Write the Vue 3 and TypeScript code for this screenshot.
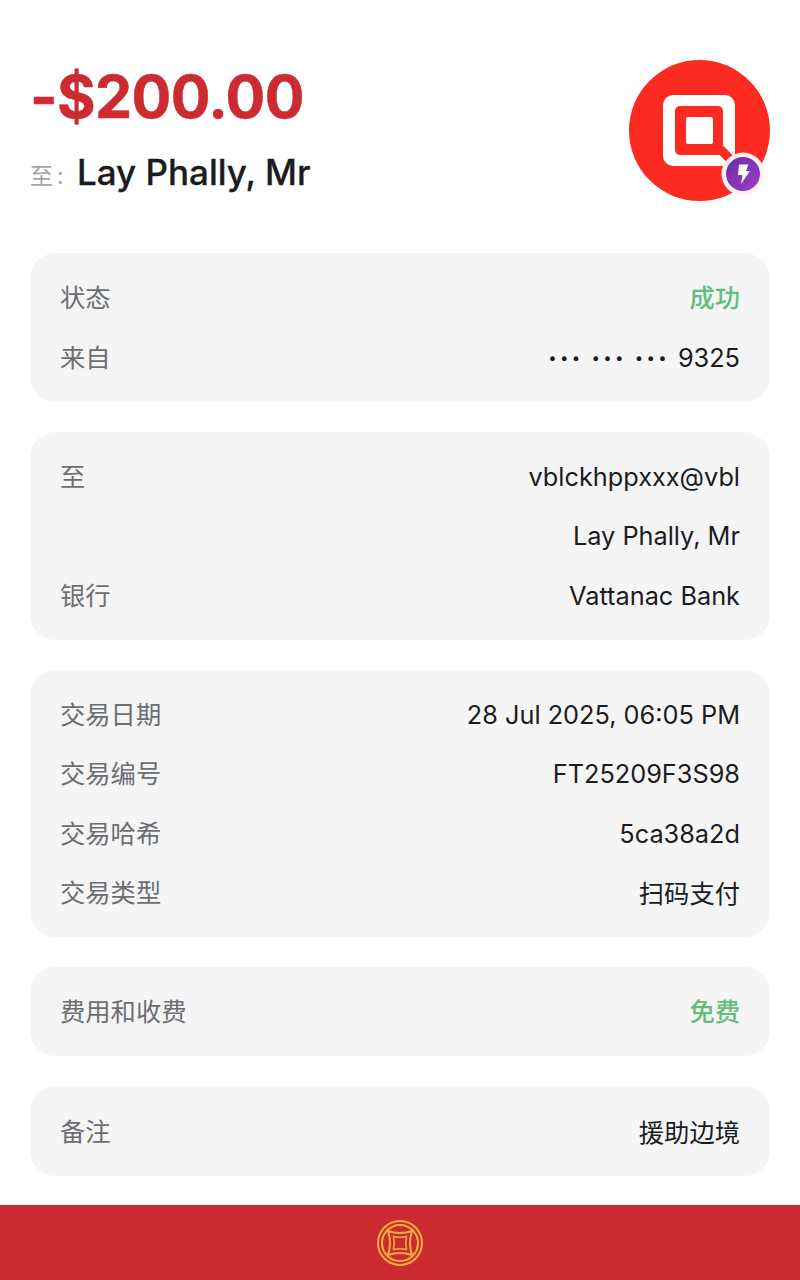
<script setup lang="ts">
interface Row { label: string; value: string; tone?: string; dots?: number }
const cards: Row[][] = [
  [
    { label: '状态', value: '成功', tone: 'good' },
    { label: '来自', value: '9325', dots: 3 },
  ],
  [
    { label: '至', value: 'vblckhppxxx@vbl' },
    { label: '', value: 'Lay Phally, Mr' },
    { label: '银行', value: 'Vattanac Bank' },
  ],
  [
    { label: '交易日期', value: '28 Jul 2025, 06:05 PM' },
    { label: '交易编号', value: 'FT25209F3S98' },
    { label: '交易哈希', value: '5ca38a2d' },
    { label: '交易类型', value: '扫码支付' },
  ],
  [{ label: '费用和收费', value: '免费', tone: 'good' }],
  [{ label: '备注', value: '援助边境' }],
]
</script>

<template>
  <div class="page">
    <header class="head">
      <div class="who">
        <div class="amount">-$200.00</div>
        <div class="to"><span class="to-label">至:</span><span class="to-name">Lay Phally, Mr</span></div>
      </div>
      <div class="logo">
        <svg width="141" height="141" viewBox="0 0 141 141">
          <circle cx="70.5" cy="70.5" r="70.5" fill="#fc2a20" />
          <rect x="34" y="35" width="72" height="71" rx="10" fill="#fff" />
          <rect x="46" y="46" width="48" height="49" rx="5" fill="#fc2a20" />
          <rect x="57" y="57" width="27" height="27" rx="2" fill="#fff" />
          <path d="M88 86 106 104" stroke="#fc2a20" stroke-width="9" />
        </svg>
        <svg class="badge" width="44" height="44" viewBox="0 0 44 44">
          <defs>
            <linearGradient id="bolt" x1="0" y1="0" x2="1" y2="1">
              <stop offset="0" stop-color="#6f2fa8" />
              <stop offset="1" stop-color="#9c3dc4" />
            </linearGradient>
          </defs>
          <circle cx="22" cy="22" r="21.500" fill="#fdf1f1" />
          <circle cx="22" cy="22" r="17" fill="url(#bolt)" />
          <path fill="#fff" d="M18 12.500h9.500l-2.500 6.500h4L20 32l1.500-9H17z" />
        </svg>
      </div>
    </header>

    <main class="cards">
      <section v-for="(card, i) in cards" :key="i" class="card">
        <div v-for="(row, j) in card" :key="j" class="row">
          <span class="label">{{ row.label }}</span>
          <span class="value" :class="row.tone">
            <span v-for="n in row.dots ?? 0" :key="n" class="dots">•••</span>{{ row.value }}
          </span>
        </div>
      </section>
    </main>

    <footer class="foot">
      <svg width="46" height="46" viewBox="0 0 46 46" fill="none" stroke="#f4ae3e">
        <circle cx="23" cy="23" r="22" stroke-width="2" />
        <circle cx="23" cy="23" r="18" stroke-width="2" />
        <path stroke-width="2" d="M11 11q12 4 24 0q-4 12 0 24q-12-4-24 0q4-12 0-24Z" />
        <path stroke-width="1.500" d="M16.500 16.500q6.500 1.500 13 0q-1.500 6.500 0 13q-6.500-1.500-13 0q1.500-6.500 0-13Z" />
      </svg>
    </footer>
  </div>
</template>

<style scoped>
.page {
  width: 800px;
  height: 1280px;
  box-sizing: border-box;
  padding-top: 60px;
  display: flex;
  flex-direction: column;
  background: #fff;
  font-family: Inter, "Noto Sans CJK SC", sans-serif;
}
.head {
  display: flex;
  justify-content: space-between;
  align-items: flex-start;
  padding: 0 30px;
  height: 193px;
}
.amount {
  font-size: 59px;
  font-weight: 700;
  letter-spacing: -0.6px;
  line-height: 74px;
  color: #cc2c31;
  -webkit-text-stroke: 0.5px #cc2c31;
}
.to {
  display: flex;
  align-items: center;
  margin-top: 13px;
  height: 50px;
}
.to-label {
  font-size: 23px;
  color: #a4a5a8;
  width: 47px;
  letter-spacing: 4px;
  white-space: nowrap;
  padding-top: 4px;
}
.to-name {
  font-size: 35px;
  font-weight: 500;
  color: #1b1c22;
  -webkit-text-stroke: 0.3px #1b1c22;
}
.logo {
  position: relative;
  width: 141px;
  height: 141px;
}
.logo svg {
  display: block;
}
.badge {
  position: absolute;
  left: 92px;
  top: 92px;
}
.cards {
  display: flex;
  flex-direction: column;
  gap: 30px;
  padding: 0 30px;
}
.card {
  background: #f5f5f6;
  border-radius: 26px;
  padding: 15px 30px;
}
.row {
  height: 59.35px;
  display: flex;
  justify-content: space-between;
  align-items: center;
  font-size: 25.3px;
}
.label {
  color: #6c6e72;
  padding-bottom: 3px;
}
.value {
  color: #1b1c22;
  display: flex;
  align-items: center;
}
.dots {
  font-size: 15px;
  letter-spacing: 3.3px;
  margin-right: 8px;
}
.value.good {
  color: #64bd7b;
  font-weight: 500;
  padding-bottom: 3px;
}
.foot {
  margin-top: auto;
  height: 75px;
  background: #cb2b30;
  display: flex;
  align-items: center;
  justify-content: center;
}
</style>
